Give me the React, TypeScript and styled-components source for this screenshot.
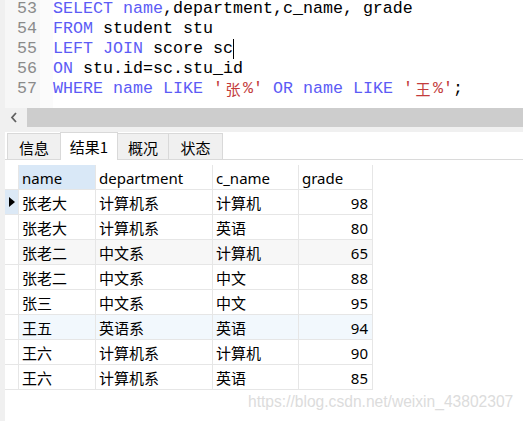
import React from "react";
import styled, { createGlobalStyle } from "styled-components";

const GlobalStyle = createGlobalStyle`
  html, body { margin: 0; padding: 0; background: #ffffff; }
  * { box-sizing: border-box; }
`;

const Page = styled.div`
  position: relative;
  width: 523px;
  height: 421px;
  overflow: hidden;
  background: #ffffff;
  border-left: 5px solid #f0f0f0;
  display: flex;
  flex-direction: column;
`;

const Editor = styled.div`
  height: 108px;
  display: flex;
  overflow: hidden;
`;

const Gutter = styled.div`
  width: 35px;
  background: #f7f7f7;
  padding-right: 3px;
  text-align: right;
  font-family: "Liberation Mono", monospace;
  font-size: 16.67px;
  line-height: 20px;
  color: #8a8a8a;
  margin-top: -1px;
`;

const GutterPad = styled.div`
  width: 13px;
  background: #fbfbfb;
`;

const Code = styled.div`
  flex: 1;
  font-family: "Liberation Mono", monospace;
  font-size: 16.67px;
  line-height: 20px;
  color: #000;
  white-space: pre;
  margin-top: -1px;
`;

const Line = styled.div`
  height: 20px;
`;

const Kw = styled.span`
  color: #5c5cf5;
`;

const Str = styled.span`
  color: #c33c3c;
`;

const Wide = styled.span`
  display: inline-block;
  width: 20px;
  text-align: center;
  font-family: "Noto Sans CJK SC", sans-serif;
  font-size: 15px;
  line-height: 20px;
  vertical-align: top;
`;

const Caret = styled.span`
  display: inline-block;
  width: 0;
  height: 20px;
  border-left: 1px solid #000;
  vertical-align: top;
`;

const ScrollRow = styled.div`
  height: 19px;
  display: flex;
  margin-left: -5px;
`;

const ScrollArrow = styled.div`
  width: 27px;
  background: #f0f0f0;
  display: flex;
  align-items: center;
  justify-content: center;
`;

const ScrollTrack = styled.div`
  flex: 1;
  background: #cdcdcd;
`;

const Gap = styled.div`
  height: 5px;
  background: #f0f0f0;
  margin-left: -5px;
`;

const TabBar = styled.div`
  height: 28px;
  display: flex;
  align-items: flex-end;
  padding-left: 2px;
  border-bottom: 1px solid #dadada;
`;

const Tab = styled.div<{ $active?: boolean; $w: number }>`
  width: ${(p) => p.$w}px;
  height: ${(p) => (p.$active ? 28 : 26)}px;
  margin-bottom: ${(p) => (p.$active ? -1 : 0)}px;
  margin-right: -1px;
  position: relative;
  z-index: ${(p) => (p.$active ? 1 : 0)};
  background: ${(p) => (p.$active ? "#ffffff" : "#f0f0f0")};
  border: 1px solid #d9d9d9;
  border-bottom: none;
  display: flex;
  align-items: center;
  justify-content: center;
  font-family: "Noto Sans CJK SC", sans-serif;
  font-size: 15px;
  color: #000;
  padding-top: ${(p) => (p.$active ? 0 : 1)}px;
`;

const Grid = styled.div`
  margin-top: 5px;
  display: flex;
  flex-direction: column;
  font-family: "Noto Sans", "Noto Sans CJK SC", sans-serif;
  font-size: 15px;
  color: #000;
`;

const Row = styled.div<{ $bg?: string }>`
  display: grid;
  grid-template-columns: 14px 77px 117px 86px 74px;
  height: 25px;
  background: ${(p) => p.$bg || "transparent"};
  width: 368px;
`;

const Cell = styled.div<{ $right?: boolean; $bg?: string }>`
  border-right: 1px solid #e6e6e6;
  border-bottom: 1px solid #e6e6e6;
  padding: 2px 4px 0 3px;
  display: flex;
  align-items: center;
  justify-content: ${(p) => (p.$right ? "flex-end" : "flex-start")};
  background: ${(p) => p.$bg || "transparent"};
  white-space: nowrap;
  overflow: hidden;
  line-height: 1;
`;

const IndicatorCell = styled.div<{ $current?: boolean }>`
  border-right: 1px solid #e6e6e6;
  border-bottom: 1px solid #e6e6e6;
  background: ${(p) => (p.$current ? "#dce9f6" : "#ffffff")};
  display: flex;
  align-items: center;
  justify-content: center;
  padding-left: 1px;
`;

const Triangle = styled.span`
  width: 0;
  height: 0;
  border-top: 5px solid transparent;
  border-bottom: 5px solid transparent;
  border-left: 6px solid #000;
`;

const Watermark = styled.div`
  position: absolute;
  left: 243px;
  top: 393px;
  font-family: "Liberation Sans", Arial, sans-serif;
  font-size: 15.6px;
  color: #dcdcdc;
  white-space: nowrap;
`;

const rows: [string, string, string, number][] = [
  ["张老大", "计算机系", "计算机", 98],
  ["张老大", "计算机系", "英语", 80],
  ["张老二", "中文系", "计算机", 65],
  ["张老二", "中文系", "中文", 88],
  ["张三", "中文系", "中文", 95],
  ["王五", "英语系", "英语", 94],
  ["王六", "计算机系", "计算机", 90],
  ["王六", "计算机系", "英语", 85],
];

const rowBg = (i: number) => (i === 2 ? "#f7f7f7" : i === 5 ? "#f2f8fd" : "#ffffff");

export default function App() {
  return (
    <>
      <GlobalStyle />
      <Page>
        <Editor>
          <Gutter>
            <Line>53</Line>
            <Line>54</Line>
            <Line>55</Line>
            <Line>56</Line>
            <Line>57</Line>
          </Gutter>
          <GutterPad />
          <Code>
            <Line>
              <Kw>SELECT</Kw> <Kw>name</Kw>,department,c_name, grade
            </Line>
            <Line>
              <Kw>FROM</Kw> student stu
            </Line>
            <Line>
              <Kw>LEFT</Kw> <Kw>JOIN</Kw> score sc<Caret />
            </Line>
            <Line>
              <Kw>ON</Kw> stu.id=sc.stu_id
            </Line>
            <Line>
              <Kw>WHERE</Kw> <Kw>name</Kw> <Kw>LIKE</Kw>{" "}
              <Str>
                '<Wide>张</Wide>%'
              </Str>{" "}
              <Kw>OR</Kw> <Kw>name</Kw> <Kw>LIKE</Kw>{" "}
              <Str>
                '<Wide>王</Wide>%'
              </Str>
              ;
            </Line>
          </Code>
        </Editor>
        <ScrollRow>
          <ScrollArrow>
            <svg width="8" height="11" viewBox="0 0 8 11">
              <path d="M6 1 L2 5.5 L6 10" fill="none" stroke="#606060" strokeWidth="1.8" />
            </svg>
          </ScrollArrow>
          <ScrollTrack />
        </ScrollRow>
        <Gap />
        <TabBar>
          <Tab $w={54}>信息</Tab>
          <Tab $w={58} $active>
            结果1
          </Tab>
          <Tab $w={52}>概况</Tab>
          <Tab $w={55}>状态</Tab>
        </TabBar>
        <Grid>
          <Row>
            <IndicatorCell />
            <Cell $bg="#d9e8f7">name</Cell>
            <Cell>department</Cell>
            <Cell>c_name</Cell>
            <Cell>grade</Cell>
          </Row>
          {rows.map((r, i) => (
            <Row key={i} $bg={rowBg(i)}>
              <IndicatorCell $current={i === 0}>{i === 0 && <Triangle />}</IndicatorCell>
              <Cell>{r[0]}</Cell>
              <Cell>{r[1]}</Cell>
              <Cell>{r[2]}</Cell>
              <Cell $right>{r[3]}</Cell>
            </Row>
          ))}
        </Grid>
        <Watermark>https://blog.csdn.net/weixin_43802307</Watermark>
      </Page>
    </>
  );
}
